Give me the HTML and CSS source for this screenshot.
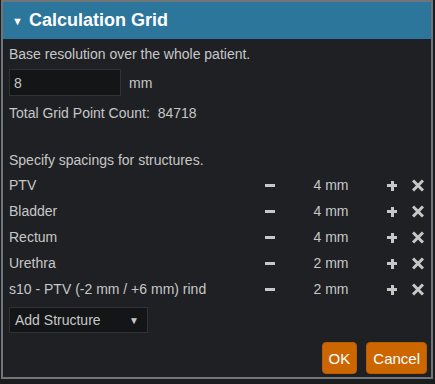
FILE: index.html
```html
<!DOCTYPE html>
<html lang="en">
<head>
    <meta charset="UTF-8">
    <title>Calculation Grid</title>
    <link rel="stylesheet" href="styles.css">
</head>
<body>

    <div class="dialog">
        <div class="dialog-header">
            <span class="caret">&#9660;</span>
            <span class="dialog-title">Calculation Grid</span>
        </div>

        <div class="dialog-body">
            <div class="line">Base resolution over the whole patient.</div>

            <div class="res-row">
                <input type="text" class="res-input" value="8">
                <span class="unit">mm</span>
            </div>

            <div class="line count">Total Grid Point Count:&nbsp;&nbsp;<span>84718</span></div>

            <div class="line spec">Specify spacings for structures.</div>

            <div class="structures">
                <div class="struct">
                    <span class="struct-name">PTV</span>
                    <span class="icon minus"></span>
                    <span class="struct-val">4 mm</span>
                    <span class="icon plus"></span>
                    <span class="icon remove"></span>
                </div>
                <div class="struct">
                    <span class="struct-name">Bladder</span>
                    <span class="icon minus"></span>
                    <span class="struct-val">4 mm</span>
                    <span class="icon plus"></span>
                    <span class="icon remove"></span>
                </div>
                <div class="struct">
                    <span class="struct-name">Rectum</span>
                    <span class="icon minus"></span>
                    <span class="struct-val">4 mm</span>
                    <span class="icon plus"></span>
                    <span class="icon remove"></span>
                </div>
                <div class="struct">
                    <span class="struct-name">Urethra</span>
                    <span class="icon minus"></span>
                    <span class="struct-val">2 mm</span>
                    <span class="icon plus"></span>
                    <span class="icon remove"></span>
                </div>
                <div class="struct">
                    <span class="struct-name">s10 - PTV (-2 mm / +6 mm) rind</span>
                    <span class="icon minus"></span>
                    <span class="struct-val">2 mm</span>
                    <span class="icon plus"></span>
                    <span class="icon remove"></span>
                </div>
            </div>

            <div class="add-select">
                <span>Add Structure</span>
                <span class="select-arrow">&#9660;</span>
            </div>

            <div class="actions">
                <button class="btn">OK</button>
                <button class="btn">Cancel</button>
            </div>
        </div>
    </div>

</body>
</html>
```

FILE: styles.css
```css
/* reset basico */
* {
    margin: 0;
    padding: 0;
    box-sizing: border-box;
}

body {
    background-color: #1a1c1e;
    color: #c6c8c8;
    font-family: "Liberation Sans", Arial, sans-serif;
    font-size: 14px;
    width: 435px;
    height: 384px;
    overflow: hidden;
}

.dialog {
    margin: 0 1px;
    width: 432px;
    height: 379px;
    border: 2px solid #6f7579;
    background-color: #1f2023;
}

.dialog-header {
    height: 37px;
    background-color: #2c769c;
    color: white;
    display: flex;
    align-items: center;
    padding-left: 9px;
}

.caret {
    font-size: 11px;
    margin-right: 6px;
}

.dialog-title {
    font-size: 18px;
    font-weight: bold;
}

.dialog-body {
    padding: 2px 1px 0 6px;
}

.line {
    line-height: 26px;
}

.res-row {
    display: flex;
    align-items: center;
    margin-top: 2px;
}

.res-input {
    width: 112px;
    height: 27px;
    background-color: #141517;
    border: 1px solid #303235;
    color: #c6c8c8;
    font-family: inherit;
    font-size: 14px;
    padding-left: 4px;
    outline: none;
}

.unit {
    margin-left: 8px;
}

.count {
    margin-top: 4px;
}

.spec {
    margin-top: 21px;
}

.struct {
    display: grid;
    grid-template-columns: 1fr 24px 98px 24px 24px;
    align-items: center;
    height: 26px;
}

.struct:first-child {
    margin-top: -1px;
}

.struct-val {
    text-align: center;
    padding-right: 4px;
}

.icon {
    position: relative;
    height: 12px;
}

.minus::before {
    content: "";
    position: absolute;
    left: 5px;
    top: 5px;
    width: 10px;
    height: 3px;
    background-color: #c6c8c8;
}

.plus::before,
.plus::after,
.remove::before,
.remove::after {
    content: "";
    position: absolute;
    background-color: #c6c8c8;
}

.plus::before {
    left: 5px;
    top: 5px;
    width: 10px;
    height: 3px;
}

.plus::after {
    left: 8.5px;
    top: 1.5px;
    width: 3px;
    height: 10px;
}

.remove::before,
.remove::after {
    left: 5px;
    top: 5px;
    width: 14px;
    height: 3px;
}

.remove::before {
    transform: rotate(45deg);
}

.remove::after {
    transform: rotate(-45deg);
}

.add-select {
    margin-top: 5px;
    width: 139px;
    height: 26px;
    background-color: #141517;
    border: 1px solid #303235;
    display: flex;
    align-items: center;
    justify-content: space-between;
    padding: 0 8px 0 5px;
}

.select-arrow {
    font-size: 10px;
}

.actions {
    display: flex;
    justify-content: flex-end;
    gap: 9px;
    margin-top: 9px;
    padding-right: 3px;
}

.btn {
    background-color: #cc6600;
    color: white;
    border: 1px solid #b85c00;
    border-radius: 4px;
    height: 32px;
    padding: 0 6px;
    font-family: inherit;
    font-size: 15px;
    cursor: pointer;
}
```
